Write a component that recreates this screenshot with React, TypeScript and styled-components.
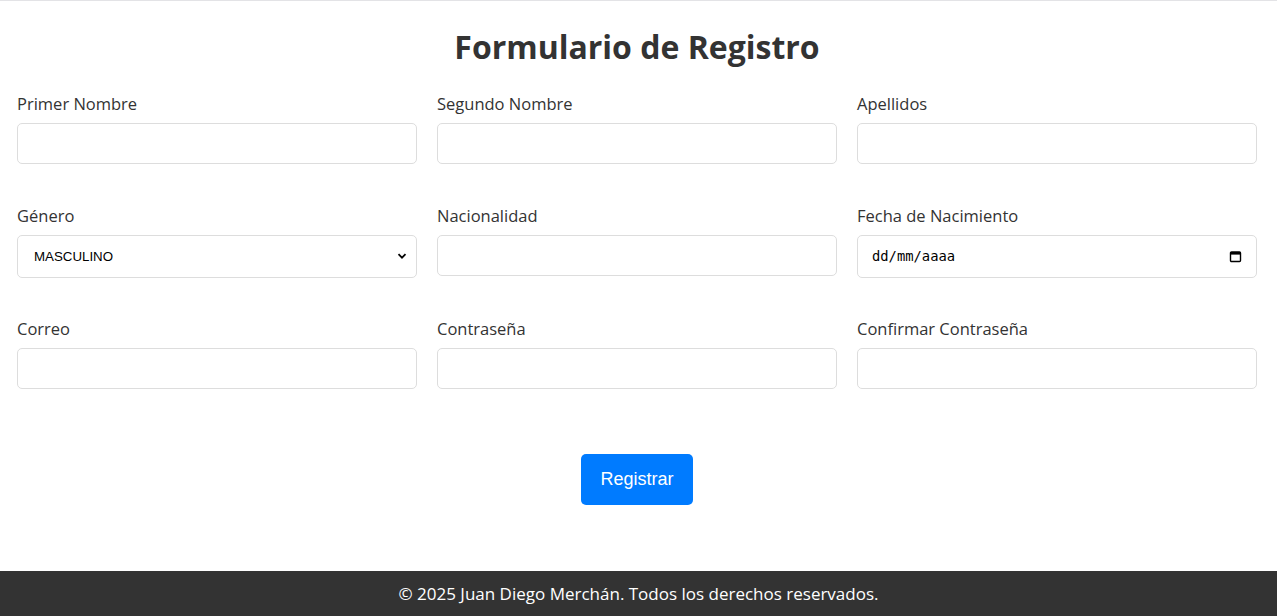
import React from "react";
import styled, { createGlobalStyle } from "styled-components";

const GlobalStyle = createGlobalStyle`
  * {
    box-sizing: border-box;
  }

  body {
    margin: 0;
    border-top: 1px solid #e3e3e6;
    background: #ffffff;
    color: #333333;
    font-family: "Open Sans", "Liberation Sans", sans-serif;
  }
`;

const Page = styled.div`
  display: flex;
  flex-direction: column;
  min-height: 615px;
`;

const Main = styled.main`
  flex: 1;
  padding: 22px 20px 0 17px;
`;

const Title = styled.h1`
  margin: 0 0 21px;
  text-align: center;
  font-size: 32px;
  line-height: 48px;
  font-weight: 700;
  color: #333333;
`;

const Grid = styled.div`
  display: grid;
  grid-template-columns: repeat(3, 400px);
  column-gap: 20px;
  row-gap: 39.5px;
`;

const Field = styled.div`
  display: flex;
  flex-direction: column;
  gap: 7px;
`;

const Label = styled.label`
  font-size: 16.5px;
  line-height: 24px;
  color: #333333;
`;

const TextInput = styled.input`
  width: 100%;
  height: 41px;
  padding: 0 10px;
  border: 1px solid #dddddd;
  border-radius: 5px;
  font-size: 16px;
  background: #ffffff;
  outline: none;
`;

const SelectWrap = styled.div`
  position: relative;
`;

const Select = styled.select`
  width: 100%;
  height: 43px;
  padding: 0 16px;
  border: 1px solid #dddddd;
  border-radius: 5px;
  appearance: none;
  background: #ffffff;
  font-family: "Liberation Sans", Arial, sans-serif;
  font-size: 13.3px;
  color: #000000;
  outline: none;
`;

const Chevron = styled.svg`
  position: absolute;
  right: 10px;
  top: 16px;
  width: 10px;
  height: 10px;
  pointer-events: none;
`;

const DateWrap = styled.div`
  position: relative;
`;

const DateInput = styled.input`
  width: 100%;
  height: 43px;
  padding: 0 14px;
  border: 1px solid #dddddd;
  border-radius: 5px;
  background: #ffffff;
  font-family: "DejaVu Sans Mono", "Liberation Mono", monospace;
  font-size: 13.8px;
  color: #000000;
  outline: none;

  &::placeholder {
    color: #000000;
    opacity: 1;
  }
`;

const CalendarIcon = styled.svg`
  position: absolute;
  right: 15px;
  top: 15px;
  width: 13px;
  height: 13px;
  pointer-events: none;
`;

const Actions = styled.div`
  display: flex;
  justify-content: center;
  padding: 65px 0 66px;
`;

const Button = styled.button`
  width: 112px;
  height: 51px;
  border: none;
  border-radius: 5px;
  background: #007bff;
  color: #ffffff;
  font-family: "Liberation Sans", Arial, sans-serif;
  font-size: 18px;
  cursor: pointer;
`;

const Footer = styled.footer`
  height: 45px;
  display: flex;
  align-items: center;
  justify-content: center;
  background: #333333;
  color: #ffffff;
  font-size: 17px;
`;

const App: React.FC = () => {
  return (
    <>
      <GlobalStyle />
      <Page>
        <Main>
          <Title>Formulario de Registro</Title>
          <form onSubmit={(e) => e.preventDefault()}>
            <Grid>
              <Field>
                <Label>Primer Nombre</Label>
                <TextInput type="text" />
              </Field>
              <Field>
                <Label>Segundo Nombre</Label>
                <TextInput type="text" />
              </Field>
              <Field>
                <Label>Apellidos</Label>
                <TextInput type="text" />
              </Field>

              <Field>
                <Label>Género</Label>
                <SelectWrap>
                  <Select defaultValue="MASCULINO">
                    <option>MASCULINO</option>
                    <option>FEMENINO</option>
                  </Select>
                  <Chevron viewBox="0 0 10 10">
                    <path d="M1.5 3.2 L5 6.7 L8.5 3.2" fill="none" stroke="#000" strokeWidth="1.8" />
                  </Chevron>
                </SelectWrap>
              </Field>
              <Field>
                <Label>Nacionalidad</Label>
                <TextInput type="text" />
              </Field>
              <Field>
                <Label>Fecha de Nacimiento</Label>
                <DateWrap>
                  <DateInput type="text" placeholder="dd/mm/aaaa" />
                  <CalendarIcon viewBox="0 0 13 13">
                    <rect x="1.5" y="2" width="10" height="9.5" rx="1" fill="none" stroke="#000" strokeWidth="1.4" />
                    <rect x="1.5" y="2" width="10" height="2.6" fill="#000" />
                  </CalendarIcon>
                </DateWrap>
              </Field>

              <Field>
                <Label>Correo</Label>
                <TextInput type="email" />
              </Field>
              <Field>
                <Label>Contraseña</Label>
                <TextInput type="password" />
              </Field>
              <Field>
                <Label>Confirmar Contraseña</Label>
                <TextInput type="password" />
              </Field>
            </Grid>
            <Actions>
              <Button type="submit">Registrar</Button>
            </Actions>
          </form>
        </Main>
        <Footer>© 2025 Juan Diego Merchán. Todos los derechos reservados.</Footer>
      </Page>
    </>
  );
};

export default App;
